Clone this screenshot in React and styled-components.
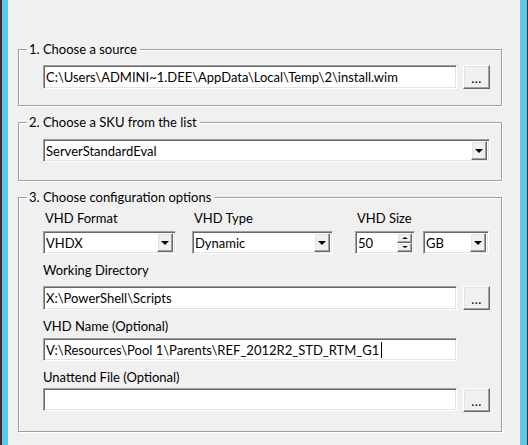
import styled, { createGlobalStyle } from 'styled-components'

const GlobalStyle = createGlobalStyle`
  html, body {
    margin: 0;
    padding: 0;
    background: #f0f0f0;
  }
  body {
    font-family: Lato, "Noto Sans", sans-serif;
    font-size: 13px;
    color: #000;
  }
`

const Window = styled.div`
  display: flex;
  height: 445px;
  overflow: hidden;
  background: #f0f0f0;
`

const Edge = styled.div`
  flex: 0 0 ${(p) => p.$w}px;
  background: ${(p) => p.$color};
`

const Content = styled.div`
  flex: 1;
  display: flex;
  flex-direction: column;
  gap: 8px;
  padding: 41px 18px 0 10px;
`

const Group = styled.fieldset`
  margin: 0;
  padding: ${(p) => p.$pad || '8px 11px 16px 24px'};
  border: 1px solid #a0a0a0;
  box-shadow: inset 1px 1px 0 #fff, 1px 1px 0 #fff;
  min-width: 0;
`

const Legend = styled.legend`
  margin-left: -16px;
  padding: 0 3px 0 2px;
  line-height: 16px;
`

const Stack = styled.div`
  display: flex;
  flex-direction: column;
  gap: ${(p) => p.$gap ?? 8}px;
`

const Row = styled.div`
  display: flex;
  align-items: flex-start;
  gap: ${(p) => p.$gap ?? 6}px;
`

const Field = styled.div`
  display: flex;
  flex-direction: column;
  gap: ${(p) => p.$gap ?? 3}px;
  width: ${(p) => (p.$w ? `${p.$w}px` : 'auto')};
  flex: ${(p) => (p.$w ? 'none' : 1)};
`

const Label = styled.div`
  line-height: 16px;
  padding-left: ${(p) => p.$indent ?? 0}px;
  white-space: nowrap;
`

const Sunken = styled.div`
  box-sizing: border-box;
  height: ${(p) => p.$h ?? 23}px;
  background: #fff;
  border: 1px solid;
  border-color: #a0a0a0 #fff #fff #a0a0a0;
  box-shadow: inset 1px 1px 0 #696969, inset -1px -1px 0 #e3e3e3;
  display: flex;
  align-items: center;
  padding: 0 2px;
  line-height: 16px;
  white-space: nowrap;
  overflow: hidden;
`

const TextBox = styled(Sunken)`
  flex: 1;
`

const Caret = styled.span`
  display: inline-block;
  width: 1px;
  height: 16px;
  background: #000;
  margin-left: 2px;
`

const Combo = styled(Sunken)`
  width: ${(p) => (p.$w ? `${p.$w}px` : 'auto')};
`

const ComboText = styled.span`
  flex: 1;
`

const RaisedBase = styled.div`
  box-sizing: border-box;
  background: #f0f0f0;
  border: 1px solid;
  border-color: #fff #696969 #696969 #fff;
  box-shadow: inset -1px -1px 0 #a0a0a0, inset 1px 1px 0 #e3e3e3;
  display: flex;
  align-items: center;
  justify-content: center;
`

const DropButton = styled(RaisedBase)`
  width: 16px;
  height: 19px;
`

const Arrow = styled.span`
  width: 0;
  height: 0;
  border-left: ${(p) => p.$s ?? 4}px solid transparent;
  border-right: ${(p) => p.$s ?? 4}px solid transparent;
  ${(p) => (p.$up ? 'border-bottom' : 'border-top')}: ${(p) => (p.$s ? p.$s - 1 : 4)}px solid #000;
`

const Spin = styled.div`
  display: flex;
  flex-direction: column;
  width: 15px;
  height: 19px;
`

const SpinButton = styled(RaisedBase)`
  flex: 1;
`

const BrowseButton = styled(RaisedBase)`
  width: 27px;
  height: 24px;
  font-size: 13px;
  line-height: 12px;
  padding-top: 2px;
  letter-spacing: 0.5px;
`

const Spacer = styled.div`
  width: 27px;
  flex: none;
`

const ComboBox = ({ value, w }) => (
  <Combo $w={w}>
    <ComboText>{value}</ComboText>
    <DropButton>
      <Arrow />
    </DropButton>
  </Combo>
)

const NumericBox = ({ value, w }) => (
  <Combo $w={w}>
    <ComboText>{value}</ComboText>
    <Spin>
      <SpinButton>
        <Arrow $up $s={3} />
      </SpinButton>
      <SpinButton>
        <Arrow $s={3} />
      </SpinButton>
    </Spin>
  </Combo>
)

export default function App() {
  return (
    <>
      <GlobalStyle />
      <Window>
        <Edge $w={2} $color='#333' />
        <Edge $w={6} $color='#5ec8ea' />
        <Content>
          <Group>
            <Legend>1. Choose a source</Legend>
            <Row>
              <TextBox $h={24}>C:\Users\ADMINI~1.DEE\AppData\Local\Temp\2\install.wim</TextBox>
              <BrowseButton>...</BrowseButton>
            </Row>
          </Group>

          <Group $pad='9px 11px 18px 24px'>
            <Legend>2. Choose a SKU from the list</Legend>
            <ComboBox value='ServerStandardEval' />
          </Group>

          <Group $pad='5px 11px 19px 24px'>
            <Legend>3. Choose configuration options</Legend>
            <Stack>
              <Row $gap={0}>
                <Field $w={149} $gap={5}>
                  <Label $indent={2}>VHD Format</Label>
                  <ComboBox value='VHDX' w={133} />
                </Field>
                <Field $w={163} $gap={5}>
                  <Label $indent={2}>VHD Type</Label>
                  <ComboBox value='Dynamic' w={141} />
                </Field>
                <Field $gap={5}>
                  <Label $indent={2}>VHD Size</Label>
                  <Row $gap={8}>
                    <NumericBox value='50' w={60} />
                    <ComboBox value='GB' w={66} />
                  </Row>
                </Field>
              </Row>

              <Field $gap={8}>
                <Label>Working Directory</Label>
                <Row>
                  <TextBox $h={24}>X:\PowerShell\Scripts</TextBox>
                  <BrowseButton>...</BrowseButton>
                </Row>
              </Field>

              <Field $gap={4}>
                <Label>VHD Name (Optional)</Label>
                <Row>
                  <TextBox>
                    V:\Resources\Pool 1\Parents\REF_2012R2_STD_RTM_G1
                    <Caret />
                  </TextBox>
                  <Spacer />
                </Row>
              </Field>

              <Field>
                <Label>Unattend File (Optional)</Label>
                <Row>
                  <TextBox />
                  <BrowseButton>...</BrowseButton>
                </Row>
              </Field>
            </Stack>
          </Group>
        </Content>
        <Edge $w={7} $color='#5ec8ea' />
        <Edge $w={1} $color='#333' />
      </Window>
    </>
  )
}
